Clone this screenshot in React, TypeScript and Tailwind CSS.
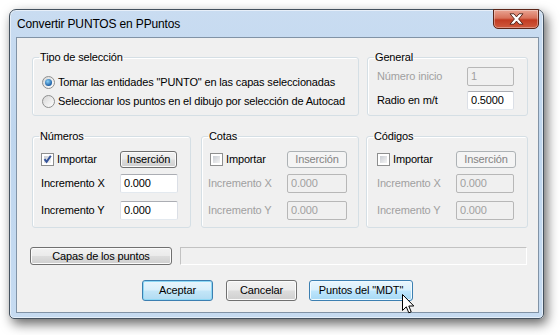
import React from 'react';

const UI = "font-['Liberation_Sans',Arial,sans-serif] text-[11px] leading-[13px] tracking-[-0.15px] text-black";

const GroupBox: React.FC<{ title: string; className?: string; children: React.ReactNode }> = ({ title, className = '', children }) => (
  <fieldset className={`border border-[#d5dfe5] rounded-[3px] shrink-0 shadow-[inset_1px_1px_0_#ffffff] ${className}`}>
    <legend className="ml-[6px] px-[1px] leading-[13px]">{title}</legend>
    {children}
  </fieldset>
);

const Radio: React.FC<{ checked?: boolean }> = ({ checked }) => (
  <span className="w-[13px] h-[13px] rounded-full border border-[#8e8f8f] bg-[linear-gradient(135deg,#d6d6d6,#ffffff)] flex items-center justify-center shrink-0">
    {checked && (
      <span className="w-[7px] h-[7px] rounded-full bg-[radial-gradient(circle_at_40%_35%,#8ad2f8,#1d5fa6_70%)]" />
    )}
  </span>
);

const Checkbox: React.FC<{ checked?: boolean }> = ({ checked }) => (
  <span className="w-[13px] h-[13px] border border-[#8e8f8f] bg-white p-[2px] shrink-0 relative">
    <span className="block w-full h-full bg-[linear-gradient(135deg,#c9cdd3,#f4f4f4)]" />
    {checked && (
      <svg className="absolute left-0 top-0" width="11" height="11" viewBox="0 0 11 11">
        <path d="M2.5 5.2 L4.6 7.8 L8.8 1.8" fill="none" stroke="#34539a" strokeWidth="2" />
      </svg>
    )}
  </span>
);

const Button: React.FC<{
  children: React.ReactNode;
  className?: string;
  disabled?: boolean;
  variant?: 'normal' | 'default' | 'hover';
}> = ({ children, className = '', disabled, variant = 'normal' }) => {
  let look =
    'border-[#707070] text-black bg-[linear-gradient(to_bottom,#f2f2f2_0%,#ebebeb_48%,#dddddd_52%,#cfcfcf_100%)] shadow-[inset_0_0_0_1px_#fbfbfb]';
  if (disabled) look = 'border-[#adb2b5] text-[#838383] bg-[#f4f4f4]';
  if (variant === 'default')
    look =
      'border-[#3c7fb1] text-black bg-[linear-gradient(to_bottom,#e9f5fc_0%,#d9effb_48%,#c3e6f8_52%,#b1dbf2_100%)] shadow-[inset_0_0_0_1px_#8ed8f5]';
  if (variant === 'hover')
    look =
      'border-[#3c7fb1] text-black bg-[linear-gradient(to_bottom,#eaf6fd_0%,#d9f0fc_48%,#bee6fd_52%,#a7d9f5_100%)] shadow-[inset_0_0_0_1px_#f0faff]';
  return (
    <div className={`border rounded-[3px] flex items-center justify-center shrink-0 ${look} ${className}`}>
      {children}
    </div>
  );
};

const Edit: React.FC<{ value: string; disabled?: boolean; className?: string }> = ({ value, disabled, className = '' }) => (
  <div
    className={`h-[19px] border rounded-[2px] flex items-center pl-[3px] shrink-0 ${
      disabled
        ? 'border-[#b7b7b7] bg-[#f0f0f0] text-[#a0a0a0]'
        : 'border-[#abadb3] border-x-[#dbdfe6] border-b-[#e3e9ef] bg-white text-black'
    } ${className}`}
  >
    {value}
  </div>
);

const ImportGroup: React.FC<{
  title: string;
  enabled: boolean;
  checked?: boolean;
  className: string;
  padClass: string;
  boxShift?: string;
  btnW: string;
  editW: string;
}> = ({ title, enabled, checked, className, padClass, boxShift = '', btnW, editW }) => {
  const label = enabled ? 'text-black' : 'text-[#a0a0a0]';
  return (
    <GroupBox title={title} className={className}>
      <div className={`flex flex-col ${padClass}`}>
        <div className="flex items-center h-[17px] mt-[8px]">
          <div className={`w-[79px] flex items-center gap-[3px] ${boxShift}`}>
            <Checkbox checked={checked} />
            <span>Importar</span>
          </div>
          <Button disabled={!enabled} className={`h-[17px] ${btnW}`}>
            Inserción
          </Button>
        </div>
        <div className="flex items-center mt-[6px]">
          <span className={`w-[79px] ${label}`}>Incremento X</span>
          <Edit value="0.000" disabled={!enabled} className={editW} />
        </div>
        <div className="flex items-center mt-[8px]">
          <span className={`w-[79px] ${label}`}>Incremento Y</span>
          <Edit value="0.000" disabled={!enabled} className={editW} />
        </div>
      </div>
    </GroupBox>
  );
};

export default function App() {
  return (
    <div className="relative w-[560px] h-[335px] bg-white pl-[9px] pt-[9px] overflow-hidden">
      {/* Window frame */}
      <div className="w-[535px] h-[310px] rounded-t-[7px] rounded-b-[5px] border border-[#45525f] bg-[linear-gradient(to_bottom,#c9dcf1,#bfd6ee_40%,#c6dbf1)] shadow-[3px_5px_12px_rgba(0,0,0,0.6),inset_0_0_0_1px_rgba(255,255,255,0.55)] flex flex-col">
        {/* Title bar */}
        <div className="h-[27px] flex justify-between">
          <span className="self-center pl-[7px] pt-[1px] font-['Liberation_Sans',Arial,sans-serif] text-[12px] tracking-[-0.15px] text-black">
            Convertir PUNTOS en PPuntos
          </span>
          <div className="mt-[-1px] mr-[4px] w-[46px] h-[20px] rounded-b-[5px] border border-[#5b2518] bg-[linear-gradient(to_bottom,#e9a493_0%,#d8715a_45%,#c23b22_55%,#cf5a3e_100%)] shadow-[inset_0_0_0_1px_rgba(255,255,255,0.35)] flex items-center justify-center">
            <svg width="15" height="12" viewBox="0 0 15 12">
              <path
                d="M1 0.8 L5 0.8 L7.5 3.9 L10 0.8 L14 0.8 L9.6 6 L14 11.2 L10 11.2 L7.5 8.1 L5 11.2 L1 11.2 L5.4 6 Z"
                fill="#ffffff"
                stroke="#4a1d14"
                strokeWidth="0.9"
              />
            </svg>
          </div>
        </div>

        {/* Client area */}
        <div className={`ml-[6px] w-[523px] h-[276px] border border-[#8193a6] bg-[#f0f0f0] pl-[15px] pt-[13px] flex flex-col ${UI}`}>
          <div className="flex">
            <GroupBox title="Tipo de selección" className="w-[327px] h-[65px]">
              <div className="flex flex-col gap-[6px] mt-[12px] pl-[9px]">
                <div className="flex items-center gap-[3px] h-[13px]">
                  <Radio checked />
                  <span>Tomar las entidades "PUNTO" en las capas seleccionadas</span>
                </div>
                <div className="flex items-center gap-[3px] h-[13px]">
                  <Radio />
                  <span>Seleccionar los puntos en el dibujo por selección de Autocad</span>
                </div>
              </div>
            </GroupBox>
            <GroupBox title="General" className="ml-[8px] w-[161px] h-[65px]">
              <div className="flex flex-col pl-[9px]">
                <div className="flex items-center mt-[3px]">
                  <span className="w-[90px] text-[#a0a0a0]">Número inicio</span>
                  <Edit value="1" disabled className="w-[47px]" />
                </div>
                <div className="flex items-center mt-[5px]">
                  <span className="w-[90px]">Radio en m/t</span>
                  <Edit value="0.5000" className="w-[47px]" />
                </div>
              </div>
            </GroupBox>
          </div>

          <div className="flex mt-[14px]">
            <ImportGroup
              title="Números"
              enabled
              checked
              className="w-[159px] h-[98px]"
              padClass="pl-[8px]"
              btnW="w-[57px]"
              editW="w-[58px]"
            />
            <ImportGroup
              title="Cotas"
              enabled={false}
              className="ml-[10px] w-[158px] h-[98px]"
              padClass="pl-[6px]"
              boxShift="pl-[2px]"
              btnW="w-[60px]"
              editW="w-[60px]"
            />
            <ImportGroup
              title="Códigos"
              enabled={false}
              className="ml-[7px] w-[162px] h-[98px]"
              padClass="pl-[10px]"
              btnW="w-[60px]"
              editW="w-[58px]"
            />
          </div>

          <div className="flex mt-[19px] -ml-[2px]">
            <Button className="w-[142px] h-[18px]">Capas de los puntos</Button>
            <div className="ml-[8px] w-[347px] h-[18px] border border-[#c2c2c2] border-b-white border-r-white" />
          </div>

          <div className="flex mt-[15px] ml-[110px]">
            <Button variant="default" className="w-[71px] h-[21px]">
              Aceptar
            </Button>
            <Button className="ml-[13px] w-[71px] h-[21px]">Cancelar</Button>
            <Button variant="hover" className="ml-[12px] w-[104px] h-[21px]">
              Puntos del "MDT"
            </Button>
          </div>
        </div>
      </div>

      {/* Mouse cursor */}
      <svg className="absolute left-[402px] top-[294px]" width="13" height="21" viewBox="0 0 13 21">
        <path
          d="M0.5 0.5 L0.5 16.5 L4.3 12.8 L6.8 18.8 L9.2 17.8 L6.8 12 L11.8 12 Z"
          fill="#ffffff"
          stroke="#000000"
          strokeWidth="1"
          strokeLinejoin="miter"
        />
      </svg>
    </div>
  );
}
